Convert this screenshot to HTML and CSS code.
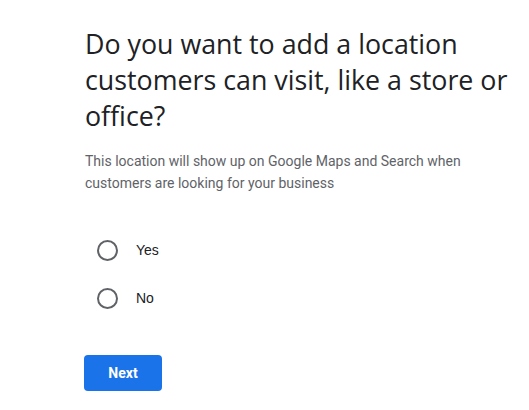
FILE: index.html
```html
<!DOCTYPE html>
<html>
<head>
<meta charset="utf-8">
<link rel="stylesheet" href="styles.css">
</head>
<body>
<main class="page">
  <h1 class="title">Do you want to add a location customers can visit, like a store or office?</h1>
  <p class="subtitle">This location will show up on Google Maps and Search when customers are looking for your business</p>
  <div class="options">
    <label class="option"><span class="radio"></span><span class="label">Yes</span></label>
    <label class="option"><span class="radio"></span><span class="label">No</span></label>
  </div>
  <button class="next">Next</button>
</main>
</body>
</html>
```
FILE: styles.css
```css
html, body {
  margin: 0;
  padding: 0;
  background: #ffffff;
}
.page {
  padding: 26px 0 0 85px;
  width: 440px;
  display: flex;
  flex-direction: column;
  align-items: flex-start;
}
.title {
  margin: 0;
  font-family: "Open Sans", sans-serif;
  font-weight: 400;
  font-size: 26.8px;
  line-height: 36px;
  color: #202124;
}
.subtitle {
  margin: 16px 0 0 0;
  font-family: Roboto, sans-serif;
  font-size: 14px;
  line-height: 22px;
  color: #5f6368;
}
.options {
  margin-top: 46px;
  display: flex;
  flex-direction: column;
  gap: 28px;
}
.option {
  display: flex;
  align-items: center;
  gap: 18px;
  padding-left: 12px;
  font-family: "Liberation Sans", Arial, sans-serif;
  font-size: 14px;
  color: #202124;
  height: 20px;
}
.radio {
  width: 17px;
  height: 17px;
  border: 2px solid #5f6368;
  border-radius: 50%;
  box-sizing: content-box;
}
.next {
  margin-top: 47px;
  margin-left: -1px;
  width: 78px;
  height: 36px;
  border: none;
  border-radius: 4px;
  background: #1a73e8;
  color: #ffffff;
  font-family: Roboto, sans-serif;
  font-weight: 700;
  font-size: 14px;
  padding: 0;
}
```
